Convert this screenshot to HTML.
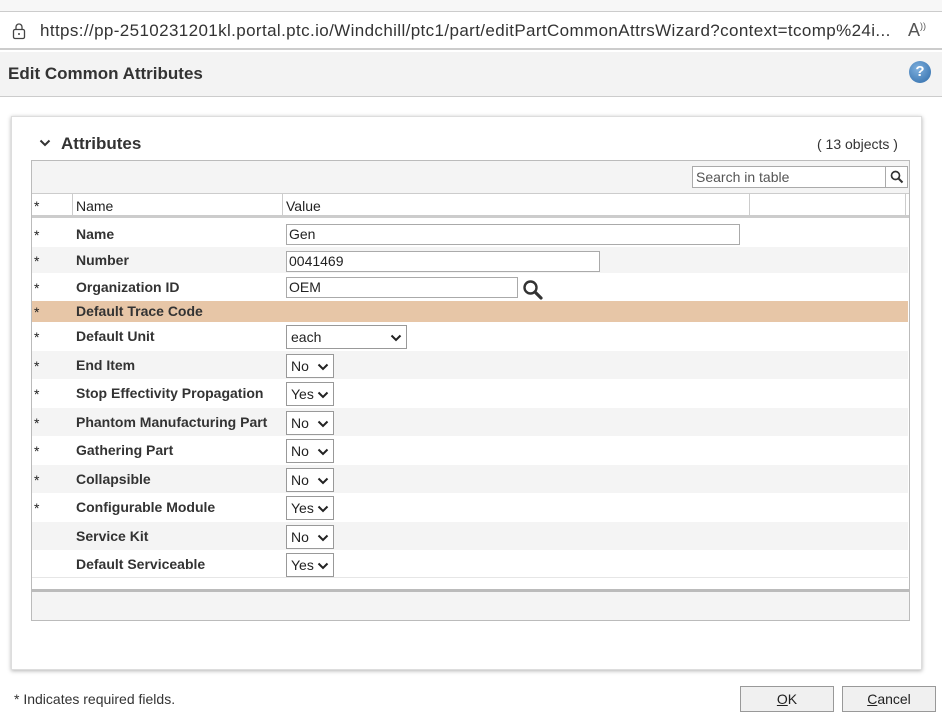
<!DOCTYPE html>
<html><head><style>
*{box-sizing:border-box;margin:0;padding:0}
body{width:942px;height:718px;overflow:hidden;background:#fff;font-family:"Liberation Sans",sans-serif;color:#222;position:relative}
.a{position:absolute}
.row{position:absolute;left:32px;width:876px;font-size:14px}
.row .s{position:absolute;left:2px}
.row .n{position:absolute;left:44px;font-weight:bold;color:#333}
.inp{position:absolute;border:1px solid #aaa;background:#fff;font-size:14px;padding-left:2px;line-height:19px;height:21px}
.sel{position:absolute;border:1px solid #999;background:#fff;font-size:14px;height:24px;line-height:22px;padding-left:4px}
.sel svg{position:absolute;right:4px;top:8px}
.btn{position:absolute;top:686px;height:26px;border:1px solid #999;background:#f0f0f0;font-size:14px;text-align:center;line-height:24px}
</style></head><body>
<div class="a" style="left:0;top:0;width:942px;height:12px;background:#f7f7f7;border-bottom:1px solid #ccc"></div>
<div class="a" style="left:0;top:12px;width:942px;height:38px;background:#fff;border-bottom:2px solid #ccc"></div>
<svg class="a" style="left:12px;top:23px" width="14" height="17"><rect x="1.5" y="6.5" width="11" height="9" rx="1.5" fill="none" stroke="#444" stroke-width="1.3"/><path d="M4 6.5V4a3 3 0 0 1 6 0v2.5" fill="none" stroke="#444" stroke-width="1.3"/><circle cx="7" cy="11" r="1" fill="#444"/></svg>
<div class="a" style="left:40px;top:21px;font-size:17px;color:#333;letter-spacing:.38px;white-space:nowrap">https://pp-2510231201kl.portal.ptc.io/Windchill/ptc1/part/editPartCommonAttrsWizard?context=tcomp%24i...</div>
<div class="a" style="left:908px;top:20px;font-size:18px;color:#555">A<sup style="font-size:9px">))</sup></div>
<div class="a" style="left:0;top:52px;width:942px;height:45px;background:#f3f3f3;border-bottom:1px solid #ccc"></div>
<div class="a" style="left:8px;top:64px;font-size:17px;font-weight:bold;color:#333">Edit Common Attributes</div>
<div class="a" style="left:909px;top:61px;width:22px;height:22px;border-radius:50%;background:radial-gradient(circle at 40% 35%,#7fb0de,#2d6aa8);color:#fff;font-weight:bold;font-size:15px;text-align:center;line-height:22px">?</div>
<div class="a" style="left:11px;top:116px;width:911px;height:554px;background:#fff;border:1px solid #ddd;box-shadow:0 1px 4px rgba(0,0,0,.3)"></div>
<svg class="a" style="left:39px;top:138px" width="12" height="10"><path d="M1.5 2.5l4.5 4.5 4.5-4.5" fill="none" stroke="#333" stroke-width="2"/></svg>
<div class="a" style="left:61px;top:134px;font-size:17px;font-weight:bold;color:#333">Attributes</div>
<div class="a" style="left:817px;top:136px;font-size:14px;color:#333">( 13 objects )</div>
<div class="a" style="left:31px;top:160px;width:879px;height:461px;border:1px solid #bbb;background:#fff"></div>
<div class="a" style="left:32px;top:161px;width:877px;height:33px;background:#f4f4f4;border-bottom:1px solid #ccc"></div>
<div class="a" style="left:692px;top:166px;width:194px;height:22px;border:1px solid #aaa;background:#fff;font-size:14px;color:#555;padding-left:3px;line-height:20px">Search in table</div>
<div class="a" style="left:885px;top:166px;width:23px;height:22px;border:1px solid #aaa;background:#fff"></div>
<svg class="a" style="left:890px;top:170px" width="14" height="14"><circle cx="5.5" cy="5.5" r="4" fill="none" stroke="#333" stroke-width="1.7"/><path d="M8.5 8.5l4 4" stroke="#333" stroke-width="2"/></svg>
<div class="a" style="left:32px;top:194px;width:877px;height:24px;background:#fff;border-bottom:3px solid #ccc;font-size:14px">
<span class="a" style="left:2px;top:4px">*</span>
<span class="a" style="left:40px;top:0;height:24px;border-left:1px solid #ccc"></span>
<span class="a" style="left:44px;top:4px">Name</span>
<span class="a" style="left:250px;top:0;height:24px;border-left:1px solid #ccc"></span>
<span class="a" style="left:254px;top:4px">Value</span>
<span class="a" style="left:717px;top:0;height:24px;border-left:1px solid #ccc"></span>
<span class="a" style="left:873px;top:0;height:24px;border-left:1px solid #ccc"></span>
</div>
<div class="row" style="top:220px;height:27px"><span class="s" style="top:7px">*</span><span class="n" style="top:6px">Name</span></div>
<div class="row" style="top:247px;height:26px;background:#f4f4f4"><span class="s" style="top:6px">*</span><span class="n" style="top:5px">Number</span></div>
<div class="row" style="top:273px;height:28px"><span class="s" style="top:7px">*</span><span class="n" style="top:6px">Organization ID</span></div>
<div class="row" style="top:301px;height:21px;background:#e7c6a7"><span class="s" style="top:3px">*</span><span class="n" style="top:2px">Default Trace Code</span></div>
<div class="row" style="top:322px;height:29px"><span class="s" style="top:7px">*</span><span class="n" style="top:6px">Default Unit</span></div>
<div class="row" style="top:351px;height:28px;background:#f4f4f4"><span class="s" style="top:7px">*</span><span class="n" style="top:6px">End Item</span></div>
<div class="row" style="top:379px;height:29px"><span class="s" style="top:7px">*</span><span class="n" style="top:6px">Stop Effectivity Propagation</span></div>
<div class="row" style="top:408px;height:28px;background:#f4f4f4"><span class="s" style="top:7px">*</span><span class="n" style="top:6px">Phantom Manufacturing Part</span></div>
<div class="row" style="top:436px;height:29px"><span class="s" style="top:7px">*</span><span class="n" style="top:6px">Gathering Part</span></div>
<div class="row" style="top:465px;height:28px;background:#f4f4f4"><span class="s" style="top:7px">*</span><span class="n" style="top:6px">Collapsible</span></div>
<div class="row" style="top:493px;height:29px"><span class="s" style="top:7px">*</span><span class="n" style="top:6px">Configurable Module</span></div>
<div class="row" style="top:522px;height:28px;background:#f4f4f4"><span class="n" style="top:6px">Service Kit</span></div>
<div class="row" style="top:550px;height:28px;border-bottom:1px solid #e6e6e6"><span class="n" style="top:6px">Default Serviceable</span></div>
<div class="inp" style="left:286px;top:224px;width:454px">Gen</div>
<div class="inp" style="left:286px;top:251px;width:314px">0041469</div>
<div class="inp" style="left:286px;top:277px;width:232px">OEM</div>
<svg class="a" style="left:522px;top:279px" width="22" height="22"><circle cx="8.5" cy="8.5" r="6" fill="none" stroke="#333" stroke-width="2.4"/><path d="M13 13l6 6" stroke="#333" stroke-width="3.2" stroke-linecap="round"/></svg>
<div class="sel" style="left:286px;top:325px;width:121px">each<svg width="12" height="8"><path d="M1.5 1.5l4.5 4.5 4.5-4.5" fill="none" stroke="#222" stroke-width="2"/></svg></div>
<div class="sel" style="left:286px;top:354px;width:48px">No<svg width="12" height="8"><path d="M1.5 1.5l4.5 4.5 4.5-4.5" fill="none" stroke="#222" stroke-width="2"/></svg></div>
<div class="sel" style="left:286px;top:382px;width:48px">Yes<svg width="12" height="8"><path d="M1.5 1.5l4.5 4.5 4.5-4.5" fill="none" stroke="#222" stroke-width="2"/></svg></div>
<div class="sel" style="left:286px;top:411px;width:48px">No<svg width="12" height="8"><path d="M1.5 1.5l4.5 4.5 4.5-4.5" fill="none" stroke="#222" stroke-width="2"/></svg></div>
<div class="sel" style="left:286px;top:439px;width:48px">No<svg width="12" height="8"><path d="M1.5 1.5l4.5 4.5 4.5-4.5" fill="none" stroke="#222" stroke-width="2"/></svg></div>
<div class="sel" style="left:286px;top:468px;width:48px">No<svg width="12" height="8"><path d="M1.5 1.5l4.5 4.5 4.5-4.5" fill="none" stroke="#222" stroke-width="2"/></svg></div>
<div class="sel" style="left:286px;top:496px;width:48px">Yes<svg width="12" height="8"><path d="M1.5 1.5l4.5 4.5 4.5-4.5" fill="none" stroke="#222" stroke-width="2"/></svg></div>
<div class="sel" style="left:286px;top:525px;width:48px">No<svg width="12" height="8"><path d="M1.5 1.5l4.5 4.5 4.5-4.5" fill="none" stroke="#222" stroke-width="2"/></svg></div>
<div class="sel" style="left:286px;top:553px;width:48px">Yes<svg width="12" height="8"><path d="M1.5 1.5l4.5 4.5 4.5-4.5" fill="none" stroke="#222" stroke-width="2"/></svg></div>
<div class="a" style="left:32px;top:589px;width:877px;height:31px;background:#f4f4f4;border-top:3px solid #bbb"></div>
<div class="a" style="left:14px;top:691px;font-size:14px;color:#333">* Indicates required fields.</div>
<div class="btn" style="left:740px;width:94px"><u>O</u>K</div>
<div class="btn" style="left:842px;width:94px"><u>C</u>ancel</div>
</body></html>
